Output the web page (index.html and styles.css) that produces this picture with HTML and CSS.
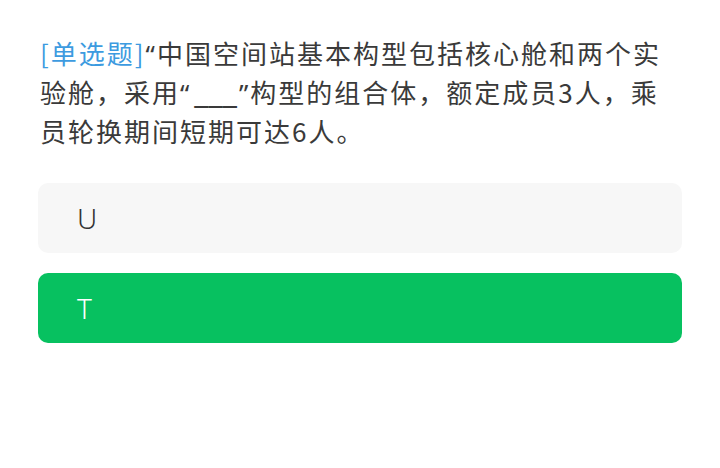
FILE: index.html
```html
<!DOCTYPE html>
<html lang="zh-CN">
<head>
<meta charset="utf-8">
<link rel="stylesheet" href="styles.css">
</head>
<body>
<div class="page">
  <p class="question"><span class="tag">[单选题]</span><span class="q">“</span>中国空间站基本构型包括核心舱和两个实验舱，采用<span class="q">“</span><span class="blank">___</span><span class="q">”</span>构型的组合体，额定成员3人，乘员轮换期间短期可达6人。</p>
  <div class="options">
    <div class="option">U</div>
    <div class="option selected">T</div>
  </div>
</div>
</body>
</html>
```
FILE: styles.css
```css
html, body {
  margin: 0;
  padding: 0;
  background: #ffffff;
}
.page {
  padding: 34px 38px 0 38px;
  font-family: "Noto Sans CJK SC", "Noto Sans", sans-serif;
}
.question {
  margin: 0 0 0 2px;
  font-size: 26px;
  letter-spacing: 2px;
  line-height: 37px;
  color: #3a3a3a;
  width: 632px;
}
.tag {
  color: #3d9be0;
}
.q {
  font-family: "Noto Sans", sans-serif;
}
.blank {
  letter-spacing: 0;
  font-family: "Noto Sans", sans-serif;
  font-size: 32px;
  line-height: 1;
  padding: 0 2px 0 3px;
}
.options {
  margin-top: 34px;
  display: flex;
  flex-direction: column;
  gap: 20px;
}
.option {
  height: 70px;
  box-sizing: border-box;
  border-radius: 10px;
  background: #f7f7f7;
  display: flex;
  align-items: center;
  padding-left: 39px;
  font-family: "Noto Sans", sans-serif;
  font-weight: 300;
  font-size: 28px;
  color: #333333;
}
.option.selected {
  background: #07c160;
  color: #ffffff;
}
```
